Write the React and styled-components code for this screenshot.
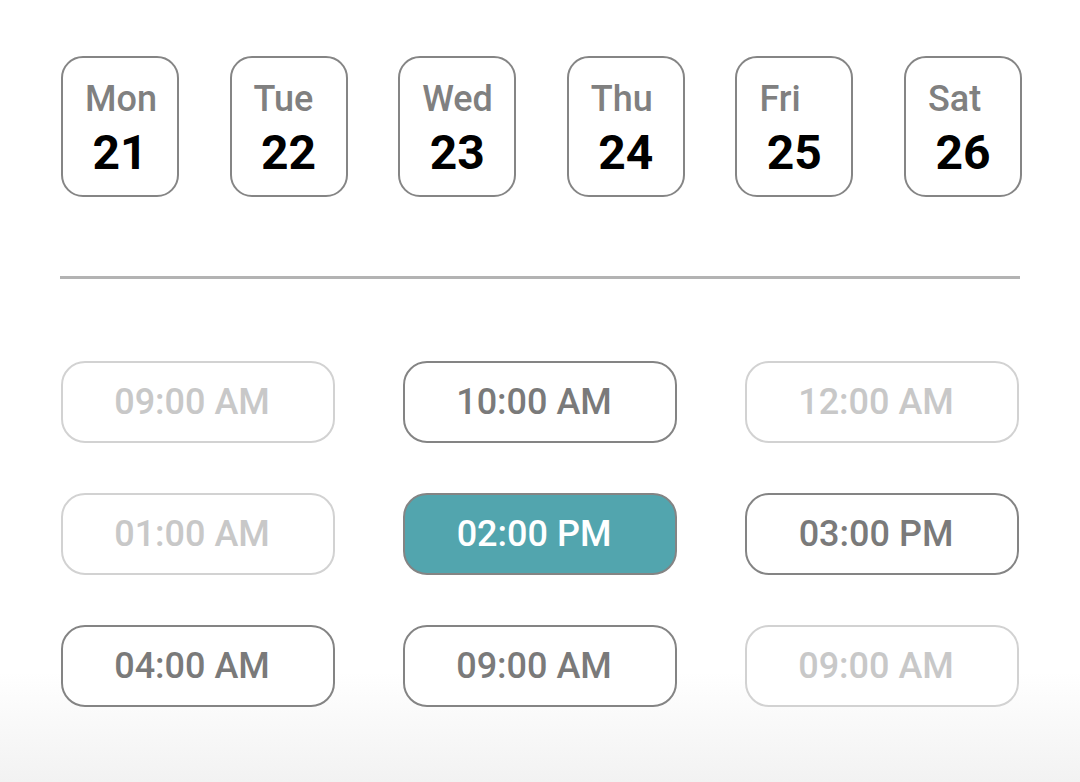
import React, { useState } from "react";
import styled, { createGlobalStyle } from "styled-components";

const days = [
  { name: "Mon", date: 21 },
  { name: "Tue", date: 22 },
  { name: "Wed", date: 23 },
  { name: "Thu", date: 24 },
  { name: "Fri", date: 25 },
  { name: "Sat", date: 26 },
];

const slots = [
  { time: "09:00 AM", disabled: true },
  { time: "10:00 AM" },
  { time: "12:00 AM", disabled: true },
  { time: "01:00 AM", disabled: true },
  { time: "02:00 PM" },
  { time: "03:00 PM" },
  { time: "04:00 AM" },
  { time: "09:00 AM" },
  { time: "09:00 AM", disabled: true },
];

const Schedule = () => {
  const [selected, setSelected] = useState(4);

  return (
    <Page>
      <GlobalStyle />
      <DayRow>
        {days.map((day) => (
          <DayCard key={day.name}>
            <DayName>{day.name}</DayName>
            <DayDate>{day.date}</DayDate>
          </DayCard>
        ))}
      </DayRow>
      <Divider />
      <SlotGrid>
        {slots.map((slot, i) => (
          <Slot
            key={i}
            $disabled={slot.disabled}
            $active={selected === i}
            onClick={() => !slot.disabled && setSelected(i)}
          >
            {slot.time}
          </Slot>
        ))}
      </SlotGrid>
    </Page>
  );
};

export default Schedule;

// 스타일 컴포넌트

const GlobalStyle = createGlobalStyle`
  * { box-sizing: border-box; }
  body {
    margin: 0;
    font-family: Roboto, "Liberation Sans", sans-serif;
    background: #fff;
  }
`;

const Page = styled.div`
  width: 1080px;
  height: 782px;
  padding: 56px 58px 0 61px;
  background: linear-gradient(to bottom, #fff 0%, #fff 86%, #f2f2f2 100%);
  overflow: hidden;
`;

const DayRow = styled.div`
  display: flex;
  justify-content: space-between;
`;

const DayCard = styled.div`
  width: 118px;
  height: 141px;
  border: 2px solid #858585;
  border-radius: 22px;
  padding: 20px 0 0 22px;
  display: flex;
  flex-direction: column;
`;

const DayName = styled.div`
  font-size: 36px;
  font-weight: 500;
  color: #808080;
  line-height: 42px;
`;

const DayDate = styled.div`
  margin: 5px 0 0 -22px;
  text-align: center;
  font-size: 48px;
  font-weight: 700;
  color: #000;
  line-height: 56px;
`;

const Divider = styled.div`
  height: 3px;
  width: 960px;
  margin: 79px 0 0 -1px;
  background: #b3b3b3;
`;

const SlotGrid = styled.div`
  display: grid;
  grid-template-columns: repeat(3, 274px);
  grid-auto-rows: 82px;
  column-gap: 68px;
  row-gap: 50px;
  margin-top: 82px;
`;

const Slot = styled.div`
  display: flex;
  align-items: center;
  justify-content: center;
  padding-right: 12px;
  border-radius: 24px;
  border: 2px solid
    ${(p) => (p.$disabled ? "#d2d2d2" : "#848484")};
  background: ${(p) => (p.$active ? "#52a5ae" : "#fff")};
  color: ${(p) => (p.$active ? "#fff" : p.$disabled ? "#c8c8c8" : "#7a7a7a")};
  font-size: 36px;
  font-weight: 500;
  cursor: ${(p) => (p.$disabled ? "default" : "pointer")};
`;
